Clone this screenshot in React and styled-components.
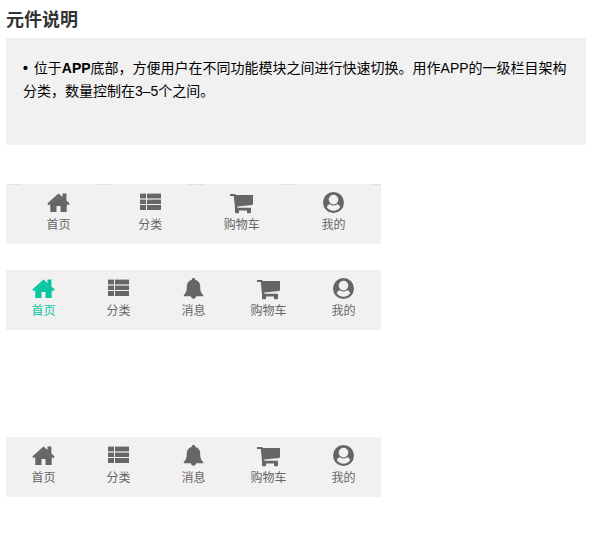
import React from 'react';
import styled, { createGlobalStyle } from 'styled-components';

const GlobalStyle = createGlobalStyle`
  * {
    box-sizing: border-box;
  }

  body {
    margin: 0;
    background: #fff;
    font-family: "Liberation Sans", "Noto Sans CJK SC", sans-serif;
  }
`;

const Page = styled.main`
  padding: 7px 27px 47px 6px;
`;

const Title = styled.h1`
  margin: 0 0 5px;
  font-size: 18px;
  line-height: 26px;
  font-weight: 700;
  color: #333;
`;

const Note = styled.section`
  min-height: 107px;
  padding: 19px 17px;
  margin-bottom: 39px;
  background: #f1f1f1;
`;

const NoteText = styled.p`
  margin: 0;
  font-size: 14px;
  line-height: 23px;
  color: #000;
`;

const Strong = styled.b`
  font-weight: 700;
`;

const Bullet = styled(Strong)`
  margin-right: 2px;
`;

const TabBar = styled.nav`
  display: flex;
  justify-content: space-between;
  width: 100%;
  max-width: 375px;
  height: 60px;
  margin-bottom: ${({ $gap }) => $gap || 0}px;
  padding: ${({ $inset }) => ($inset ? '0 10px 0 15px' : '0')};
  background: #f1f1f1;
  box-shadow: ${({ $inset }) => ($inset ? 'inset 0 1px #e2e2e2' : 'none')};
`;

const Tab = styled.button`
  display: flex;
  flex: 0 1 75px;
  flex-direction: column;
  align-items: center;
  padding: 7px 0 0;
  border: 0;
  background: #f1f1f1;
  color: ${({ $active }) => ($active ? '#09c6a0' : '#666')};
  font-family: inherit;
  font-size: 12px;
  line-height: 20px;
  white-space: nowrap;
  cursor: pointer;
`;

const Icon = styled.svg`
  display: block;
  width: 25px;
  height: 24px;
  flex: none;
  fill: currentColor;
`;

const drawings = {
  home: (
    <>
      <path d="M12.500 2.500 16.500 6V2.600h3.900v6.800l3.300 3-1.500 1.900-9.700-8.500-9.700 8.500-1.500-1.900z" />
      <path d="m12.500 5.900 8.200 7.200V21h-6.200v-6h-4v6H4.300v-7.900z" />
      <path opacity=".65" d="M12.500 5 21 12.500v2h-1L12.500 8 5 14.500H4v-2z" />
    </>
  ),
  list: (
    <>
      <path d="M2 3h6v4H2zm7 0h14v4H9zM2 9h6v4H2zm7 0h14v4H9zM2 14h6v5H2zm7 0h14v5H9z" />
      <path opacity=".4" d="M2 2h6v1H2zm7 0h14v1H9zM2 7h6v2H2zm7 0h14v2H9z" />
    </>
  ),
  bell: (
    <path d="M12.500 1c1.100 0 1.700.7 1.700 1.700 3.200.8 5 3.300 5 6.700 0 4.500.8 6.300 3 8.500v1.300h-7.100c-.2 1.600-1.200 2.500-2.600 2.500s-2.400-.9-2.600-2.500H2.800v-1.300c2.200-2.200 3-4 3-8.500 0-3.400 1.800-5.900 5-6.700 0-1 .6-1.700 1.700-1.700z" />
  ),
  cart: (
    <path d="M1 3h4.600c.6 0 1 .3 1.100 1.100H24v8.900q0 .8-.9.900L8.300 15.500l.2 1.300H22v4.600q0 .8-.8.800h-2.400q-.8 0-.8-.8v-2H10v2q0 .8-.8.800H6.800q-.8 0-.8-.8v-4.300L4.800 5H1z" />
  ),
  user: (
    <path
      fillRule="evenodd"
      d="M12.500 1a10.500 10.500 0 1 1 0 21 10.500 10.500 0 0 1 0-21zm0 2.800a4.800 4.800 0 1 0 0 9.600 4.800 4.800 0 0 0 0-9.600zm0 15.900c2.800 0 5.200-1.300 6.600-3.500-.3-1.600-1.600-2.600-3.200-2.900-1 .8-2.100 1.200-3.400 1.200s-2.400-.4-3.400-1.200c-1.600.3-2.900 1.300-3.200 2.900 1.400 2.200 3.800 3.500 6.600 3.500z"
    />
  ),
};

const home = { icon: 'home', label: '首页' };
const list = { icon: 'list', label: '分类' };
const bell = { icon: 'bell', label: '消息' };
const cart = { icon: 'cart', label: '购物车' };
const user = { icon: 'user', label: '我的' };

function Navigation({ items, active, inset, gap, name }) {
  return (
    <TabBar $inset={inset} $gap={gap} aria-label={name}>
      {items.map(({ icon, label }) => (
        <Tab key={icon} type="button" $active={icon === active}>
          <Icon viewBox="0 0 25 24" aria-hidden="true">
            {drawings[icon]}
          </Icon>
          {label}
        </Tab>
      ))}
    </TabBar>
  );
}

export default function App() {
  return (
    <Page lang="zh-CN">
      <GlobalStyle />
      <Title>元件说明</Title>
      <Note>
        <NoteText>
          <Bullet>•</Bullet> 位于<Strong>APP</Strong>底部，方便用户在不同功能模块之间进行快速切换。用作APP的一级栏目架构分类，数量控制在3–5个之间。
        </NoteText>
      </Note>
      <Navigation name="四项导航" items={[home, list, cart, user]} inset gap={26} />
      <Navigation name="五项导航（选中）" items={[home, list, bell, cart, user]} active="home" gap={107} />
      <Navigation name="五项导航" items={[home, list, bell, cart, user]} />
    </Page>
  );
}
